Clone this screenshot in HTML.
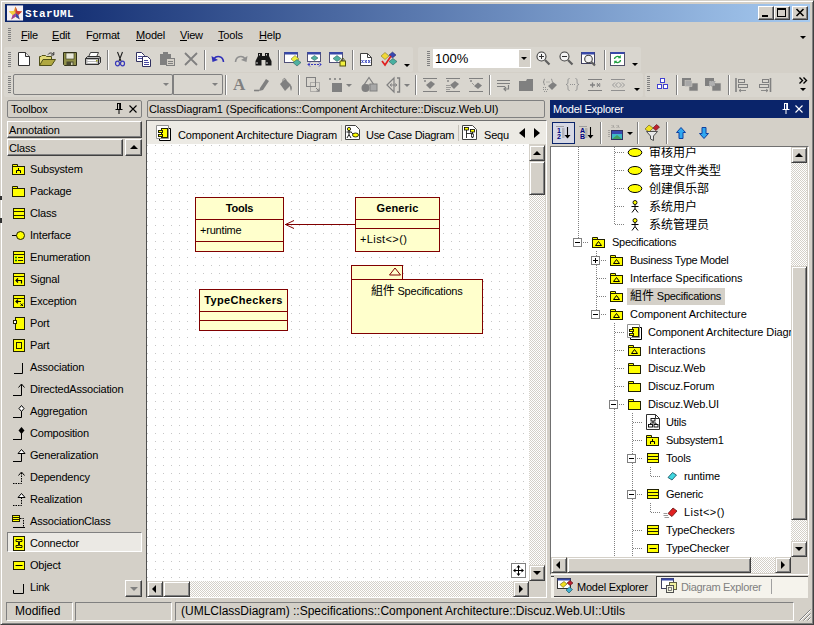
<!DOCTYPE html>
<html><head><meta charset="utf-8"><title>StarUML</title>
<style>
*{box-sizing:border-box;margin:0;padding:0}
html,body{width:814px;height:625px;overflow:hidden;background:#d4d0c8}
body{font-family:"Liberation Sans","Noto Sans CJK SC",sans-serif;font-size:11px;color:#000;position:relative}
#w{position:absolute;left:0;top:0;width:814px;height:625px;background:#d4d0c8;overflow:hidden}
.a{position:absolute}
.t{position:absolute;white-space:nowrap;line-height:14px;height:14px;letter-spacing:-0.2px}
.t12{font-size:12px}
.raised{border:1px solid;border-color:#fff #404040 #404040 #fff;box-shadow:inset -1px -1px 0 #808080}
.raised2{border:1px solid;border-color:#d4d0c8 #404040 #404040 #d4d0c8;box-shadow:inset 1px 1px 0 #fff,inset -1px -1px 0 #808080}
.sunken{border:1px solid;border-color:#808080 #fff #fff #808080;box-shadow:inset 1px 1px 0 #404040,inset -1px -1px 0 #d4d0c8}
.sunk1{border:1px solid;border-color:#808080 #fff #fff #808080}
.hdr{border:1px solid #808080;border-radius:2px;background:#d4d0c8}
.grip{position:absolute;width:3px;background:repeating-linear-gradient(to bottom,#808080 0,#808080 1px,transparent 1px,transparent 2px)}
.sep{position:absolute;width:2px;border-left:1px solid #808080;border-right:1px solid #fff}
.sbtrack{background:repeating-conic-gradient(#fff 0% 25%,#d4d0c8 0% 50%) 0 0/2px 2px}
u{text-decoration:underline}
svg{position:absolute;overflow:visible}
.tri{position:absolute;width:0;height:0;border-style:solid}
</style></head><body><div id="w">
<!-- outer frame -->
<div class="a" style="left:0;top:0;width:814px;height:625px;border:1px solid;border-color:#d4d0c8 #404040 #404040 #d4d0c8;box-shadow:inset 1px 1px 0 #fff,inset -1px -1px 0 #808080"></div>
<!-- title bar -->
<div class="a" style="left:5px;top:4px;width:805px;height:18px;background:linear-gradient(to right,#0a246a 0%,#a6caf0 100%)"></div>
<svg style="left:7px;top:5px" width="17" height="16" viewBox="0 0 18 16"><rect x="0" y="0" width="17" height="16" fill="#f4f0f4"/><polygon points="9,1 11,6 16,6.5 12,10 13.5,15 9,12 4.5,15 6,10 2,6.5 7,6" fill="#e8b030"/><polygon points="9,1 11,6 16,6.5 12,10 9,8" fill="#d03838"/><polygon points="12,10 13.5,15 9,12 9,8" fill="#3848b0"/><polygon points="9,12 4.5,15 6,10 9,8" fill="#a040a0"/><polygon points="2,6.5 7,6 9,8 6,10" fill="#f0d040"/></svg>
<div class="t" style="left:25px;top:7px;color:#fff;font:bold 11px/15px 'Liberation Mono','Noto Sans CJK SC',monospace;letter-spacing:0.4px">StarUML</div>
<!-- window buttons -->
<div class="a raised" style="left:758px;top:6px;width:16px;height:14px;background:#d4d0c8"></div>
<div class="a" style="left:762px;top:15px;width:6px;height:2px;background:#000"></div>
<div class="a raised" style="left:774px;top:6px;width:16px;height:14px;background:#d4d0c8"></div>
<div class="a" style="left:777px;top:8px;width:9px;height:9px;border:1px solid #000;border-top-width:2px"></div>
<div class="a raised" style="left:792px;top:6px;width:16px;height:14px;background:#d4d0c8"></div>
<svg style="left:796px;top:9px" width="8" height="7" viewBox="0 0 8 7"><path d="M0.5,0 L7.5,7 M7.5,0 L0.5,7" stroke="#000" stroke-width="1.6" fill="none"/></svg>
<!-- menu bar -->
<div class="grip" style="left:8px;top:28px;height:13px"></div>
<div class="t" style="left:21px;top:28px"><u>F</u>ile</div>
<div class="t" style="left:52px;top:28px"><u>E</u>dit</div>
<div class="t" style="left:86px;top:28px">F<u>o</u>rmat</div>
<div class="t" style="left:136px;top:28px"><u>M</u>odel</div>
<div class="t" style="left:180px;top:28px"><u>V</u>iew</div>
<div class="t" style="left:218px;top:28px"><u>T</u>ools</div>
<div class="t" style="left:259px;top:28px"><u>H</u>elp</div>
<div class="tri" style="left:800px;top:36px;border-width:3px 3px 0 3px;border-color:#000 transparent transparent transparent"></div>
<!-- edge specks --><div class="a" style="left:0;top:196px;width:2px;height:4px;background:#303030"></div><div class="a" style="left:0;top:218px;width:2px;height:5px;background:#303030"></div>
<!-- toolbar backgrounds -->
<div class="a" style="left:4px;top:47px;width:409px;height:25px;background:#d9d6cf;border-radius:2px"></div>
<div class="a" style="left:418px;top:47px;width:223px;height:25px;background:#d9d6cf;border-radius:2px"></div>
<div class="a" style="left:4px;top:73px;width:639px;height:24px;background:#d9d6cf;border-radius:2px"></div>
<div class="a" style="left:645px;top:73px;width:165px;height:24px;background:#d9d6cf;border-radius:2px"></div>
<!-- toolbar 1 -->
<div class="grip" style="left:8px;top:52px;height:15px"></div>
<!-- new -->
<svg style="left:17px;top:51px" width="16" height="16" viewBox="0 0 16 16"><path d="M1.5,1.5 H8.5 L12.5,5.5 V14.5 H1.5 Z" fill="#fff" stroke="#303030"/><path d="M8.5,1.5 V5.5 H12.5" fill="#e8e8e8" stroke="#303030"/></svg>
<!-- open -->
<svg style="left:39px;top:51px" width="18" height="16" viewBox="0 0 18 16"><path d="M0.5,14.5 V5.5 H2 L3,4.5 H6.5 L7.5,5.5 H12.5 V8" fill="#e0d878" stroke="#505018"/><path d="M0.5,14.5 L4,8.5 H16.5 L12.5,14.5 Z" fill="#b0a840" stroke="#505018"/><path d="M9,3.5 C10.5,1.5 13,1.5 14.5,3.5 M14.8,1 V4 H12" fill="none" stroke="#303030"/></svg>
<!-- save -->
<svg style="left:62px;top:51px" width="16" height="16" viewBox="0 0 16 16"><path d="M1.5,1.5 H14.5 V14.5 H2.5 L1.5,13.5 Z" fill="#909048" stroke="#303018"/><rect x="4" y="2" width="8" height="6" fill="#e8e8d8" stroke="#303018" stroke-width="0.6"/><rect x="4.5" y="10.5" width="7" height="4" fill="#484830"/><rect x="9" y="11.5" width="1.6" height="2.5" fill="#d0d0b0"/></svg>
<!-- print -->
<svg style="left:84px;top:51px" width="18" height="16" viewBox="0 0 18 16"><path d="M4.5,6 L6.5,1.5 H14.5 L12.5,6" fill="#fff" stroke="#404040"/><path d="M1.5,7.5 L3.5,5.5 H15.5 L16.5,6.5 V11.5 L14.5,13.5 H1.5 Z" fill="#b8b8b8" stroke="#303030"/><path d="M1.5,7.5 H14.5 V13.5 M14.5,7.5 L16.5,6.5" fill="none" stroke="#303030"/><path d="M3.5,9.5 H12.5 M3.5,11.5 H12.5" stroke="#fff"/><rect x="12" y="9" width="1.5" height="1.5" fill="#a0a020"/></svg>
<div class="sep" style="left:107px;top:50px;height:20px"></div>
<!-- cut -->
<svg style="left:114px;top:51px" width="12" height="16" viewBox="0 0 12 16"><path d="M3.5,1 L7,10 M8.5,1 L5,10" fill="none" stroke="#202020" stroke-width="1.1"/><ellipse cx="3.5" cy="12.5" rx="2" ry="2.4" fill="none" stroke="#3838b8" stroke-width="1.2"/><ellipse cx="8.5" cy="12.5" rx="2" ry="2.4" fill="none" stroke="#3838b8" stroke-width="1.2"/></svg>
<!-- copy -->
<svg style="left:136px;top:51px" width="16" height="16" viewBox="0 0 16 16"><path d="M0.5,1.5 H5.5 L8.5,4.5 V10.5 H0.5 Z" fill="#fff" stroke="#303060"/><path d="M6.5,5.5 H11.5 L14.5,8.5 V15.5 H6.5 Z" fill="#fff" stroke="#303060"/><path d="M2,5.5 H6 M2,7.5 H6 M8,9.5 H12 M8,11.5 H13 M8,13.5 H13" stroke="#4848a0"/></svg>
<!-- paste (disabled) -->
<svg style="left:159px;top:51px" width="17" height="16" viewBox="0 0 17 16"><path d="M1,3 H12 V14 H1 Z" fill="#808080"/><rect x="4" y="1" width="5" height="3" fill="#808080"/><rect x="7.5" y="7.5" width="8" height="7" fill="#d4d0c8" stroke="#808080"/><path d="M9,10.5 H14 M9,12.5 H14" stroke="#808080"/></svg>
<!-- delete (disabled) -->
<svg style="left:184px;top:52px" width="14" height="14" viewBox="0 0 14 14"><path d="M1,1 L13,13 M13,1 L1,13" stroke="#808080" stroke-width="1.8" fill="none"/></svg>
<div class="sep" style="left:204px;top:50px;height:20px"></div>
<!-- undo -->
<svg style="left:211px;top:53px" width="14" height="12" viewBox="0 0 14 12"><path d="M3,5.5 C6,2 12,3 12.5,9" fill="none" stroke="#3030b8" stroke-width="1.6"/><path d="M0.5,3 L1.5,9 L7,7 Z" fill="#3030b8"/></svg>
<!-- redo (disabled) -->
<svg style="left:234px;top:53px" width="14" height="12" viewBox="0 0 14 12"><path d="M11,5.5 C8,2 2,3 1.5,9" fill="none" stroke="#909090" stroke-width="1.6"/><path d="M13.5,3 L12.5,9 L7,7 Z" fill="#909090"/></svg>
<!-- find -->
<svg style="left:255px;top:51px" width="17" height="16" viewBox="0 0 17 16"><path d="M3,2 H7 V5 H10 V2 H14 V5 L16.5,10 V14.5 H10.5 V9 H6.5 V14.5 H0.5 V10 L3,5 Z" fill="#181818"/><path d="M2,11 V13 M12,11 V13 M4.5,3 V4.5 M11.5,3 V4.5" stroke="#d0d0d0" stroke-width="1"/></svg>
<div class="sep" style="left:278px;top:50px;height:20px"></div>
<!-- win icons -->
<svg style="left:284px;top:51px" width="18" height="16" viewBox="0 0 18 16"><rect x="0.5" y="1.5" width="13" height="10" fill="#fff" stroke="#505078"/><rect x="0.5" y="1" width="13" height="2.5" fill="#3848a8"/><polygon points="7,8 11,4.5 15,8 11,11.5" fill="#f0f040" stroke="#606020" stroke-width="0.5"/><polygon points="9,11.5 13,8.5 17,11.5 13,15" fill="#50b0a0" stroke="#205050" stroke-width="0.5"/></svg>
<svg style="left:307px;top:51px" width="16" height="16" viewBox="0 0 16 16"><rect x="0.5" y="1.5" width="13" height="9" fill="#fff" stroke="#505078"/><rect x="0.5" y="1" width="13" height="2.5" fill="#3848a8"/><polygon points="4,7 7.5,4.5 11,7 7.5,9.5" fill="#50b0a0" stroke="#205050" stroke-width="0.5"/><path d="M1,13.5 H14" stroke="#3838c0" stroke-dasharray="2 1"/><path d="M3,11.5 L1,13.5 L3,15.5 M12,11.5 L14,13.5 L12,15.5" fill="none" stroke="#3838c0"/></svg>
<svg style="left:329px;top:51px" width="18" height="16" viewBox="0 0 18 16"><rect x="0.5" y="1.5" width="13" height="10" fill="#fff" stroke="#505078"/><rect x="0.5" y="1" width="13" height="2.5" fill="#3848a8"/><polygon points="4,7.5 8,4.5 12,7.5 8,10.5" fill="#50b0a0" stroke="#205050" stroke-width="0.5"/><rect x="11" y="10" width="5.5" height="5" fill="#f0f040" stroke="#505010"/><path d="M12.5,10 V8.5 C12.5,7 15,7 15,8.5 V10" fill="none" stroke="#505010"/></svg>
<div class="sep" style="left:352px;top:50px;height:20px"></div>
<svg style="left:359px;top:51px" width="14" height="16" viewBox="0 0 14 16"><path d="M1.5,2.5 H8.5 L12.5,6.5 V14.5 H1.5 Z" fill="#fff" stroke="#404040"/><path d="M8.5,2.5 V6.5 H12.5" fill="none" stroke="#404040"/><path d="M2.5,9 L4.5,12 M4.5,9 L2.5,12 M5.8,9 L7.8,12 M7.8,9 L5.8,12 M9.2,9 L11.2,12 M11.2,9 L9.2,12" stroke="#3040c0" stroke-width="0.9"/></svg>
<svg style="left:380px;top:51px" width="18" height="16" viewBox="0 0 18 16"><polygon points="1,5 5,1.5 9,5 5,8.5" fill="#f0d838" stroke="#706010" stroke-width="0.5"/><polygon points="9,4 12.5,1 16,4 12.5,7" fill="#3848b0" stroke="#202060" stroke-width="0.5"/><polygon points="9,10.5 13,7.5 17,10.5 13,14" fill="#48b0a0" stroke="#205050" stroke-width="0.5"/><path d="M2,10 L5,14 L11,5" fill="none" stroke="#e02020" stroke-width="1.7"/></svg>
<div class="tri" style="left:404px;top:64px;border-width:3px 3px 0 3px;border-color:#000 transparent transparent transparent"></div>
<!-- zoom toolbar -->
<div class="grip" style="left:427px;top:51px;height:15px"></div>
<div class="a" style="left:433px;top:49px;width:98px;height:19px;background:#fff"></div>
<div class="t" style="left:435px;top:51px;font-size:13px;line-height:15px;letter-spacing:0">100%</div>
<div class="a" style="left:519px;top:50px;width:11px;height:17px;background:#d4d0c8"></div>
<div class="tri" style="left:521px;top:57px;border-width:3px 3px 0 3px;border-color:#000 transparent transparent transparent"></div>
<!-- zoom in -->
<svg style="left:536px;top:51px" width="15" height="15" viewBox="0 0 15 15"><circle cx="5.5" cy="5.5" r="4.5" fill="#f4f4f4" stroke="#404040" stroke-width="1.1"/><path d="M3,5.5 H8 M5.5,3 V8" stroke="#303030"/><path d="M9,9 L13.5,13.5" stroke="#606060" stroke-width="2.2"/></svg>
<svg style="left:559px;top:51px" width="15" height="15" viewBox="0 0 15 15"><circle cx="5.5" cy="5.5" r="4.5" fill="#f4f4f4" stroke="#404040" stroke-width="1.1"/><path d="M3,5.5 H8" stroke="#303030"/><path d="M9,9 L13.5,13.5" stroke="#606060" stroke-width="2.2"/></svg>
<svg style="left:581px;top:51px" width="16" height="16" viewBox="0 0 16 16"><rect x="0.5" y="1.5" width="13" height="11" fill="#fff" stroke="#404060"/><rect x="0.5" y="1" width="13" height="2.5" fill="#3848a8"/><circle cx="7.5" cy="8" r="3.8" fill="#f0f0f0" stroke="#404040" stroke-width="1.1"/><path d="M10.5,11 L14,14.5" stroke="#606060" stroke-width="2.2"/></svg>
<div class="sep" style="left:604px;top:50px;height:20px"></div>
<svg style="left:610px;top:51px" width="16" height="16" viewBox="0 0 16 16"><rect x="0.5" y="1.5" width="14" height="13" fill="#fff" stroke="#505068"/><rect x="0.5" y="1" width="14" height="2" fill="#3848a8"/><path d="M4.5,8 C4.5,5.5 8,4.5 10,6.5 M10.5,9 C10.5,11.5 7,12.5 5,10.5" fill="none" stroke="#20a040" stroke-width="1.4"/><path d="M10.8,4 V7.2 H7.6 Z M4.2,13 V9.8 H7.4 Z" fill="#20a040"/></svg>
<div class="tri" style="left:632px;top:63px;border-width:3px 3px 0 3px;border-color:#000 transparent transparent transparent"></div>
<!-- toolbar 2 -->
<div class="grip" style="left:8px;top:76px;height:17px"></div>
<div class="a" style="left:13px;top:74px;width:160px;height:21px;border:1px solid #808080;border-radius:2px"></div>
<div class="tri" style="left:163px;top:83px;border-width:3px 3px 0 3px;border-color:#808080 transparent transparent transparent"></div>
<div class="a" style="left:172px;top:74px;width:51px;height:21px;border:1px solid #808080;border-radius:2px;border-left-width:2px"></div>
<div class="tri" style="left:212px;top:83px;border-width:3px 3px 0 3px;border-color:#808080 transparent transparent transparent"></div>
<div class="sep" style="left:225px;top:75px;height:20px"></div>
<div class="t" style="left:233px;top:75px;font:bold 17px/20px 'Liberation Serif',serif;color:#808080">A</div>
<!-- pen -->
<svg style="left:254px;top:77px" width="16" height="16" viewBox="0 0 16 16"><path d="M6,11 L12,2 L15,4 L9,13 L5,14 Z" fill="#808080"/><path d="M0,13.5 H5" stroke="#808080" stroke-width="1.6"/></svg>
<!-- bucket -->
<svg style="left:278px;top:77px" width="15" height="16" viewBox="0 0 15 16"><path d="M2,7 L7,2 L13,8 L7,14 Z" fill="#808080"/><path d="M5,5 C4,1 8,0 8,4" fill="none" stroke="#808080"/><path d="M12,8 C14.5,9 14,12 13,14 C12,12 12,10 12,8 Z" fill="#808080"/></svg>
<div class="sep" style="left:298px;top:75px;height:20px"></div>
<!-- dashed squares -->
<svg style="left:306px;top:77px" width="15" height="16" viewBox="0 0 15 16"><rect x="0.5" y="0.5" width="9" height="9" fill="none" stroke="#808080"/><rect x="4.5" y="5.5" width="9" height="9" fill="none" stroke="#808080" stroke-dasharray="1 1"/><path d="M10,11 L13,14 M13,11.5 V14 H10.5" stroke="#808080" fill="none"/></svg>
<!-- dots + square -->
<svg style="left:328px;top:77px" width="26" height="16" viewBox="0 0 26 16"><path d="M1,1 L3,3 M3,1 L1,3 M6,1 L8,3 M8,1 L6,3 M11,1 L13,3 M13,1 L11,3" stroke="#808080" stroke-width="0.8"/><rect x="4" y="6" width="10" height="9" fill="#808080"/><polygon points="18,7 24,7 21,10" fill="#808080"/></svg>
<!-- shapes -->
<svg style="left:361px;top:76px" width="17" height="17" viewBox="0 0 17 17"><polygon points="8,1.5 13,9 3,9" fill="none" stroke="#808080" stroke-width="1.2"/><circle cx="4.5" cy="12" r="4" fill="#808080"/><rect x="9" y="8" width="7" height="7" fill="#a8a8a8" stroke="#808080"/></svg>
<!-- arrows -->
<svg style="left:386px;top:76px" width="16" height="18" viewBox="0 0 16 18"><path d="M1,9 L8,2 V16 Z" fill="none" stroke="#808080" stroke-width="1.2"/><path d="M11,2 H13.5 V16 H11" fill="none" stroke="#808080" stroke-width="1.4"/><path d="M4,9 H11 M6,7.5 L4,9 L6,10.5 M9,7.5 L11,9 L9,10.5" stroke="#808080" fill="none" stroke-width="0.9"/></svg>
<div class="tri" style="left:404px;top:84px;border-width:3px 3px 0 3px;border-color:#808080 transparent transparent transparent"></div>
<div class="sep" style="left:415px;top:75px;height:20px"></div>
<!-- three underline icons -->
<svg style="left:422px;top:77px" width="16" height="16" viewBox="0 0 16 16"><path d="M1,1.5 H15 M1,14.5 H15" stroke="#808080"/><polygon points="4,8 9,4 13,7 8,12" fill="#808080"/><path d="M2,3 L4,5 M4,3 L2,5" stroke="#808080" stroke-width="0.7"/></svg>
<svg style="left:445px;top:77px" width="16" height="16" viewBox="0 0 16 16"><path d="M1,1.5 H15 M1,14.5 H15" stroke="#808080"/><polygon points="5,8 10,4 14,7 9,12" fill="#808080"/><path d="M2,3 L4,5 M4,3 L2,5 M1,8.5 H5 M1,10.5 H6 M1,12.5 H5" stroke="#808080" stroke-width="0.7"/></svg>
<svg style="left:468px;top:77px" width="16" height="16" viewBox="0 0 16 16"><path d="M1,1.5 H15 M1,14.5 H15" stroke="#808080"/><polygon points="6,9 10,5.5 14,8.5 10,12" fill="#808080"/><path d="M2,3 L4,5 M4,3 L2,5 M4,6 L6,8" stroke="#808080" stroke-width="0.7"/></svg>
<div class="sep" style="left:489px;top:75px;height:20px"></div>
<svg style="left:497px;top:79px" width="14" height="13" viewBox="0 0 14 13"><path d="M0,1.5 H13 M0,4.5 H13 M0,7.5 H8" stroke="#808080" stroke-width="1.2"/><path d="M11.5,6 V10 H7 M9,8 L7,10 L9,12" fill="none" stroke="#808080" stroke-width="1.2"/></svg>
<svg style="left:519px;top:78px" width="15" height="14" viewBox="0 0 15 14"><path d="M0,3 H7 L8,1 H14 V13 H0 Z" fill="#808080"/></svg>
<svg style="left:542px;top:77px" width="16" height="16" viewBox="0 0 16 16"><polygon points="6,9 11,5 15,8 10,13" fill="#808080"/><path d="M3,2 C1,2 3,5 1,5 C3,5 1,8 3,8 M9,2 C11,2 9,5 11,5" fill="none" stroke="#808080" stroke-width="0.8"/><path d="M4.5,5 H8 M1,10.5 H5 M1,12.5 H6 M2,14.5 H6" stroke="#808080" stroke-width="0.8" stroke-dasharray="1 1"/></svg>
<svg style="left:565px;top:77px" width="16" height="16" viewBox="0 0 16 16"><path d="M4.5,1.5 C1.5,1.5 4.5,7.5 1,7.5 C4.5,7.5 1.5,13.5 4.5,13.5 M10.5,1.5 C13.5,1.5 10.5,7.5 14,7.5 C10.5,7.5 13.5,13.5 10.5,13.5" fill="none" stroke="#909090" stroke-width="1"/><path d="M5,7.5 H10" stroke="#909090" stroke-dasharray="1 1"/></svg>
<svg style="left:588px;top:78px" width="15" height="14" viewBox="0 0 15 14"><path d="M0,1.5 H14 M0,12.5 H14" stroke="#808080"/><path d="M2,7 H7 M4.5,4.5 V9.5" stroke="#808080" stroke-width="1.3"/><path d="M9,5 L12,9 M9,9 L12,5 M8.5,7 H12.5" stroke="#808080" stroke-width="0.9"/></svg>
<svg style="left:611px;top:78px" width="15" height="14" viewBox="0 0 15 14"><path d="M0,1.5 H14 M0,12.5 H14" stroke="#909090"/><path d="M4,4.5 L1.5,7 L4,9.5 M7,4.5 L4.5,7 L7,9.5 M8,4.5 L10.5,7 L8,9.5 M11,4.5 L13.5,7 L11,9.5" fill="none" stroke="#909090" stroke-width="0.9"/></svg>
<div class="tri" style="left:634px;top:88px;border-width:3px 3px 0 3px;border-color:#000 transparent transparent transparent"></div>
<div class="grip" style="left:647px;top:76px;height:15px"></div>
<!-- blue boxes -->
<svg style="left:657px;top:78px" width="12" height="12" viewBox="0 0 12 12"><rect x="3.5" y="0.5" width="4" height="4" fill="#fff" stroke="#4040d0"/><rect x="0.5" y="6.5" width="4" height="4" fill="#fff" stroke="#4040d0"/><rect x="6.5" y="6.5" width="4" height="4" fill="#fff" stroke="#4040d0"/></svg>
<div class="sep" style="left:676px;top:75px;height:20px"></div>
<svg style="left:682px;top:78px" width="17" height="14" viewBox="0 0 17 14"><rect x="0" y="0" width="9" height="8" fill="#808080"/><rect x="7" y="5" width="9" height="8" fill="#808080" stroke="#d4d0c8" stroke-width="0.6"/><rect x="3" y="2.5" width="7" height="6" fill="#a8a8a8" stroke="#d4d0c8" stroke-width="0.5"/></svg>
<svg style="left:705px;top:78px" width="17" height="14" viewBox="0 0 17 14"><rect x="0" y="0" width="9" height="8" fill="#808080"/><rect x="7" y="5" width="9" height="8" fill="#808080" stroke="#d4d0c8" stroke-width="0.6"/><rect x="4" y="3" width="6" height="5" fill="#b0b0b0" stroke="#808080" stroke-width="0.5" stroke-dasharray="1 1"/></svg>
<div class="sep" style="left:728px;top:75px;height:20px"></div>
<svg style="left:735px;top:78px" width="14" height="14" viewBox="0 0 14 14"><path d="M1,0 V14" stroke="#808080" stroke-width="1.6"/><rect x="3.5" y="1.5" width="6" height="3" fill="none" stroke="#808080"/><rect x="3.5" y="6.5" width="9" height="3" fill="none" stroke="#808080"/><path d="M4,12.5 H11 M6,11 L4,12.5 L6,14" stroke="#808080" fill="none" stroke-width="0.9"/></svg>
<svg style="left:758px;top:78px" width="14" height="14" viewBox="0 0 14 14"><path d="M12.5,0 V14" stroke="#808080" stroke-width="1.6"/><rect x="4.5" y="1.5" width="6" height="3" fill="none" stroke="#808080"/><rect x="1.5" y="6.5" width="9" height="3" fill="none" stroke="#808080"/><path d="M3,12.5 H10 M8,11 L10,12.5 L8,14" stroke="#808080" fill="none" stroke-width="0.9"/></svg>
<svg style="left:799px;top:77px" width="8" height="7" viewBox="0 0 8 7"><path d="M0.5,0.5 L3.5,3.5 L0.5,6.5 M4.5,0.5 L7.5,3.5 L4.5,6.5" fill="none" stroke="#000" stroke-width="1.4"/></svg>
<div class="tri" style="left:800px;top:88px;border-width:3px 3px 0 3px;border-color:#000 transparent transparent transparent"></div>
<!-- toolbox -->
<div class="a hdr" style="left:7px;top:100px;width:135px;height:18px"></div>
<div class="t" style="left:11px;top:102px">Toolbox</div>
<svg style="left:115px;top:103px" width="8" height="11" viewBox="0 0 8 11"><path d="M2,0.5 H6 M2.5,0.5 V6 M5.5,0.5 V6 M4.7,0.5 V6 M0.5,6.5 H7.5 M4,7 V11" stroke="#000" fill="none"/></svg>
<svg style="left:129px;top:105px" width="8" height="8" viewBox="0 0 8 8"><path d="M0.5,0.5 L7.5,7.5 M7.5,0.5 L0.5,7.5" stroke="#000" stroke-width="1.1" fill="none"/></svg>
<div class="a raised" style="left:7px;top:121px;width:135px;height:17px"></div>
<div class="t" style="left:9px;top:123px">Annotation</div>
<div class="a raised" style="left:7px;top:139px;width:116px;height:17px"></div>
<div class="t" style="left:9px;top:141px">Class</div>
<div class="a raised" style="left:125px;top:139px;width:17px;height:17px"></div>
<div class="tri" style="left:130px;top:145px;border-width:0 4px 4px 4px;border-color:transparent transparent #000 transparent"></div>
<svg style="left:12px;top:163px" width="14" height="14" viewBox="0 0 14 14"><path d="M0.5,3.5 V1.5 H5.5 V3.5" fill="#ffff00" stroke="#202000"/><rect x="0.5" y="3.5" width="12" height="8" fill="#ffff00" stroke="#202000"/><path d="M6.5,5 V7.5 M4.5,10 V7.5 H8.5 V10" fill="none" stroke="#000"/></svg>
<div class="t" style="left:30px;top:162px">Subsystem</div>
<svg style="left:12px;top:185px" width="14" height="14" viewBox="0 0 14 14"><path d="M0.5,3.5 V1.5 H5.5 V3.5" fill="#ffff00" stroke="#202000"/><rect x="0.5" y="3.5" width="12" height="8" fill="#ffff00" stroke="#202000"/></svg>
<div class="t" style="left:30px;top:184px">Package</div>
<svg style="left:12px;top:207px" width="14" height="14" viewBox="0 0 14 14"><rect x="1.5" y="1.5" width="11" height="10" fill="#ffff00" stroke="#202000"/><path d="M1.5,4.5 H12.5 M1.5,8.5 H12.5" stroke="#202000"/></svg>
<div class="t" style="left:30px;top:206px">Class</div>
<svg style="left:12px;top:229px" width="14" height="14" viewBox="0 0 14 14"><path d="M0,6.5 H5" stroke="#000"/><circle cx="8.5" cy="6.5" r="4" fill="#ffff00" stroke="#202000"/></svg>
<div class="t" style="left:30px;top:228px">Interface</div>
<svg style="left:12px;top:251px" width="14" height="14" viewBox="0 0 14 14"><rect x="1.5" y="0.5" width="11" height="12" fill="#ffff00" stroke="#202000"/><path d="M1.5,3.5 H12.5" stroke="#202000"/><path d="M3,6.5 H5 M3,9.5 H5" stroke="#008000" stroke-width="1.6"/><path d="M6,6.5 H11 M6,9.5 H11" stroke="#202000"/></svg>
<div class="t" style="left:30px;top:250px">Enumeration</div>
<svg style="left:12px;top:273px" width="14" height="14" viewBox="0 0 14 14"><rect x="1.5" y="0.5" width="11" height="12" fill="#ffff00" stroke="#202000"/><path d="M1.5,3.5 H12.5" stroke="#202000"/><path d="M4,7.5 H9.5 V10.5 M6,5.5 L4,7.5 L6,9.5" fill="none" stroke="#000" stroke-width="1.2"/></svg>
<div class="t" style="left:30px;top:272px">Signal</div>
<svg style="left:12px;top:295px" width="14" height="14" viewBox="0 0 14 14"><rect x="1.5" y="0.5" width="11" height="12" fill="#ffff00" stroke="#202000"/><path d="M1.5,3.5 H12.5" stroke="#202000"/><path d="M4,6.5 H9 M6,4.8 L4,6.5 L6,8.2" fill="none" stroke="#000" stroke-width="1.2"/><path d="M8.5,8.5 L11,11 M11,8.5 L8.5,11" stroke="#000"/></svg>
<div class="t" style="left:30px;top:294px">Exception</div>
<svg style="left:12px;top:317px" width="14" height="14" viewBox="0 0 14 14"><rect x="3.5" y="0.5" width="9" height="12" fill="#ffff00" stroke="#202000"/><rect x="1.5" y="3.5" width="3" height="3" fill="#fff" stroke="#202000"/></svg>
<div class="t" style="left:30px;top:316px">Port</div>
<svg style="left:12px;top:339px" width="14" height="14" viewBox="0 0 14 14"><rect x="1.5" y="0.5" width="11" height="12" fill="#ffff00" stroke="#202000"/><rect x="4.5" y="3.5" width="5" height="6" fill="#ffff00" stroke="#202000"/></svg>
<div class="t" style="left:30px;top:338px">Part</div>
<svg style="left:12px;top:361px" width="14" height="14" viewBox="0 0 14 14"><path d="M2,12.5 H10.5 V2" fill="none" stroke="#000"/></svg>
<div class="t" style="left:30px;top:360px">Association</div>
<svg style="left:12px;top:383px" width="14" height="14" viewBox="0 0 14 14"><path d="M1,12.5 H9.5 V1.5 M6.5,4.5 L9.5,1 L12.5,4.5" fill="none" stroke="#000"/></svg>
<div class="t" style="left:30px;top:382px">DirectedAssociation</div>
<svg style="left:12px;top:405px" width="14" height="14" viewBox="0 0 14 14"><path d="M1,12.5 H9.5 V6" fill="none" stroke="#000"/><polygon points="9.5,0.5 12,3.5 9.5,6.5 7,3.5" fill="#fff" stroke="#000"/></svg>
<div class="t" style="left:30px;top:404px">Aggregation</div>
<svg style="left:12px;top:427px" width="14" height="14" viewBox="0 0 14 14"><path d="M1,12.5 H9.5 V6" fill="none" stroke="#000"/><polygon points="9.5,0 12.5,3.5 9.5,7 6.5,3.5" fill="#000"/></svg>
<div class="t" style="left:30px;top:426px">Composition</div>
<svg style="left:12px;top:449px" width="14" height="14" viewBox="0 0 14 14"><path d="M1,12.5 H9.5 V5" fill="none" stroke="#000"/><polygon points="9.5,0.5 13,4.5 6,4.5" fill="#fff" stroke="#000"/></svg>
<div class="t" style="left:30px;top:448px">Generalization</div>
<svg style="left:12px;top:471px" width="14" height="14" viewBox="0 0 14 14"><path d="M1,12.5 H9.5 V1.5" fill="none" stroke="#000" stroke-dasharray="1.5 1"/><path d="M6.5,4.5 L9.5,1 L12.5,4.5" fill="none" stroke="#000"/></svg>
<div class="t" style="left:30px;top:470px">Dependency</div>
<svg style="left:12px;top:493px" width="14" height="14" viewBox="0 0 14 14"><path d="M1,12.5 H9.5 V5" fill="none" stroke="#000" stroke-dasharray="1.5 1"/><polygon points="9.5,0.5 13,4.5 6,4.5" fill="#fff" stroke="#000"/></svg>
<div class="t" style="left:30px;top:492px">Realization</div>
<svg style="left:12px;top:515px" width="14" height="14" viewBox="0 0 14 14"><rect x="0.5" y="0.5" width="7" height="6" fill="#ffff00" stroke="#202000"/><path d="M0.5,2.5 H7.5 M0.5,4.5 H7.5" stroke="#202000"/><path d="M8,3.5 H11.5 V12" fill="none" stroke="#000" stroke-dasharray="1.5 1"/><path d="M1,12.5 H13" stroke="#000"/></svg>
<div class="t" style="left:30px;top:514px">AssociationClass</div>
<div class="a" style="left:7px;top:532px;width:135px;height:20px;background:#ebe9e4;border:1px solid;border-color:#808080 #fff #fff #808080"></div>
<svg style="left:12px;top:537px" width="14" height="14" viewBox="0 0 14 14"><rect x="1.5" y="-0.5" width="11" height="14" fill="#ffff00" stroke="#202000"/><path d="M4,2.5 H10 V4.5 H7.5 V8.5 H10 V10.5 H4 V8.5 H6.5 V4.5 H4 Z" fill="#ffff00" stroke="#000" stroke-width="0.9"/></svg>
<div class="t" style="left:30px;top:536px">Connector</div>
<svg style="left:12px;top:559px" width="14" height="14" viewBox="0 0 14 14"><rect x="1.5" y="2.5" width="11" height="8" fill="#ffff00" stroke="#202000"/><path d="M3.5,6.5 H10.5" stroke="#000"/></svg>
<div class="t" style="left:30px;top:558px">Object</div>
<svg style="left:12px;top:581px" width="14" height="14" viewBox="0 0 14 14"><path d="M1.5,9 V12.5 H11.5 V3" fill="none" stroke="#000"/></svg>
<div class="t" style="left:30px;top:580px">Link</div>
<div class="a raised" style="left:125px;top:580px;width:17px;height:17px"></div>
<div class="tri" style="left:130px;top:587px;border-width:4px 4px 0 4px;border-color:#808080 transparent transparent transparent"></div>
<!-- diagram header -->
<div class="a hdr" style="left:147px;top:100px;width:398px;height:18px"></div>
<div class="t" style="left:149px;top:102px;letter-spacing:-0.1px">ClassDiagram1 (Specifications::Component Architecture::Discuz.Web.UI)</div>
<!-- diagram frame -->
<div class="a" style="left:146px;top:120px;width:401px;height:478px;border:1px solid;border-color:#707070 #fff #fff #505050"></div>
<!-- tab strip -->
<div class="a" style="left:147px;top:121px;width:399px;height:23px;background:#eceae4"></div>
<!-- tab1 icon: component diagram -->
<svg style="left:156px;top:125px" width="16" height="16" viewBox="0 0 16 16"><path d="M3.5,3.5 H14.5 V15.5 H3.5 Z" fill="#fff" stroke="#000"/><path d="M0.5,0.5 H12.5 V13.5 H0.5 Z" fill="#fff" stroke="#909090"/><rect x="5.5" y="3.5" width="6" height="9" fill="#ffff00" stroke="#202000"/><rect x="2.5" y="5.5" width="4" height="2" fill="#ffff00" stroke="#202000"/><rect x="2.5" y="9.5" width="4" height="2" fill="#ffff00" stroke="#202000"/></svg>
<div class="t" style="left:178px;top:128px;letter-spacing:-0.12px">Component Architecture Diagram</div>
<div class="a" style="left:341px;top:125px;width:1px;height:16px;background:#c4c1b9"></div>
<!-- tab2 icon: use case -->
<svg style="left:345px;top:125px" width="16" height="16" viewBox="0 0 16 16"><path d="M0.5,0.5 H10.5 L14.5,4.5 V14.5 H0.5 Z" fill="#fff" stroke="#404040"/><circle cx="4" cy="4" r="1.6" fill="#ffff00" stroke="#000" stroke-width="0.8"/><path d="M4,5.5 V9.5 M1.5,7 H6.5 M4,9.5 L2,13 M4,9.5 L6,13" stroke="#000" fill="none" stroke-width="0.9"/><ellipse cx="10.5" cy="10" rx="3" ry="2" fill="#ffff00" stroke="#000" stroke-width="0.8"/><path d="M6,7 L8,9" stroke="#000" stroke-width="0.8"/></svg>
<div class="t" style="left:366px;top:128px;letter-spacing:-0.3px">Use Case Diagram</div>
<div class="a" style="left:458px;top:125px;width:1px;height:16px;background:#c4c1b9"></div>
<!-- tab3 icon: sequence -->
<svg style="left:462px;top:125px" width="16" height="16" viewBox="0 0 16 16"><path d="M0.5,0.5 H10.5 L14.5,4.5 V14.5 H0.5 Z" fill="#fff" stroke="#404040"/><rect x="2.5" y="2.5" width="4" height="2.5" fill="#ffff00" stroke="#000" stroke-width="0.8"/><rect x="8.5" y="4.5" width="4" height="2.5" fill="#ffff00" stroke="#000" stroke-width="0.8"/><path d="M4.5,5 V13 M10.5,7 V13 M4.5,8.5 H10" stroke="#000" stroke-width="0.8" fill="none"/><rect x="9.5" y="9" width="2" height="3" fill="#fff" stroke="#000" stroke-width="0.7"/></svg>
<div class="t" style="left:484px;top:128px">Sequ</div>
<div class="tri" style="left:519px;top:128px;border-width:5px 6px 5px 0;border-color:transparent #000 transparent transparent"></div>
<div class="tri" style="left:534px;top:128px;border-width:5px 0 5px 6px;border-color:transparent transparent transparent #000"></div>
<!-- canvas -->
<div class="a" style="left:147px;top:144px;width:382px;height:437px;background-color:#fff;background-image:linear-gradient(90deg,#fff 7px,transparent 7px),linear-gradient(#fff 7px,#c6c6c6 7px);background-size:8px 8px;background-position:1px 2px"></div>
<!-- UML: Tools -->
<div class="a" style="left:195px;top:197px;width:89px;height:55px;background:#ffffcc;border:1px solid #800000"></div>
<div class="a" style="left:195px;top:219px;width:89px;height:1px;background:#800000"></div>
<div class="a" style="left:195px;top:241px;width:89px;height:1px;background:#800000"></div>
<div class="t" style="left:195px;top:201px;width:89px;text-align:center;font-weight:bold">Tools</div>
<div class="t" style="left:200px;top:223px">+runtime</div>
<!-- UML: Generic -->
<div class="a" style="left:355px;top:197px;width:85px;height:55px;background:#ffffcc;border:1px solid #800000"></div>
<div class="a" style="left:355px;top:219px;width:85px;height:1px;background:#800000"></div>
<div class="a" style="left:355px;top:228px;width:85px;height:1px;background:#800000"></div>
<div class="t" style="left:355px;top:201px;width:85px;text-align:center;font-weight:bold;letter-spacing:0.15px">Generic</div>
<div class="t" style="left:360px;top:232px;letter-spacing:0.4px">+List&lt;&gt;()</div>
<!-- arrow -->
<svg style="left:284px;top:219px" width="72" height="11" viewBox="0 0 72 11"><path d="M1,5.5 H71 M10,1.5 L1.5,5.5 L10,9.5" fill="none" stroke="#800000" stroke-width="1"/></svg>
<!-- UML: TypeCheckers -->
<div class="a" style="left:199px;top:289px;width:89px;height:42px;background:#ffffcc;border:1px solid #800000"></div>
<div class="a" style="left:199px;top:311px;width:89px;height:1px;background:#800000"></div>
<div class="a" style="left:199px;top:320px;width:89px;height:1px;background:#800000"></div>
<div class="t" style="left:199px;top:293px;width:89px;text-align:center;font-weight:bold;letter-spacing:0.35px">TypeCheckers</div>
<!-- UML: package -->
<div class="a" style="left:351px;top:265px;width:52px;height:15px;background:#ffffcc;border:1px solid #800000"></div>
<div class="a" style="left:351px;top:279px;width:132px;height:55px;background:#ffffcc;border:1px solid #800000"></div>
<svg style="left:388px;top:267px" width="14" height="9" viewBox="0 0 14 9"><polygon points="7,1 12.5,8 1.5,8" fill="#ffffcc" stroke="#800000"/></svg>
<div class="t" style="left:371px;top:283px;line-height:16px;height:16px"><span style="font-size:12px">組件</span><span style="letter-spacing:-0.2px"> Specifications</span></div>
<!-- v scrollbar -->
<div class="a sbtrack" style="left:529px;top:145px;width:16px;height:436px"></div>
<div class="a raised2" style="left:529px;top:145px;width:16px;height:16px;background:#d4d0c8"></div>
<div class="tri" style="left:533px;top:151px;border-width:0 4px 4px 4px;border-color:transparent transparent #000 transparent"></div>
<div class="a raised2" style="left:529px;top:161px;width:16px;height:34px;background:#d4d0c8"></div>
<div class="a raised2" style="left:529px;top:565px;width:16px;height:16px;background:#d4d0c8"></div>
<div class="tri" style="left:533px;top:571px;border-width:4px 4px 0 4px;border-color:#000 transparent transparent transparent"></div>
<!-- move icon -->
<div class="a" style="left:511px;top:563px;width:15px;height:15px;background:#fff;border:1px solid #808080"></div>
<svg style="left:513px;top:565px" width="11" height="11" viewBox="0 0 11 11"><path d="M5.5,1 V10 M1,5.5 H10" stroke="#000"/><path d="M5.5,0 L7.5,2.5 H3.5 Z M5.5,11 L7.5,8.5 H3.5 Z M0,5.5 L2.5,3.5 V7.5 Z M11,5.5 L8.5,3.5 V7.5 Z" fill="#000"/></svg>
<!-- h scrollbar -->
<div class="a sbtrack" style="left:147px;top:581px;width:382px;height:16px"></div>
<div class="a raised2" style="left:147px;top:581px;width:16px;height:16px;background:#d4d0c8"></div>
<div class="tri" style="left:152px;top:585px;border-width:4px 4px 4px 0;border-color:transparent #000 transparent transparent"></div>
<div class="a raised2" style="left:163px;top:581px;width:27px;height:16px;background:#d4d0c8"></div>
<div class="a raised2" style="left:513px;top:581px;width:16px;height:16px;background:#d4d0c8"></div>
<div class="tri" style="left:519px;top:585px;border-width:4px 0 4px 4px;border-color:transparent transparent transparent #000"></div>
<div class="a" style="left:529px;top:581px;width:16px;height:16px;background:#d4d0c8"></div>
<!-- model explorer -->
<div class="a" style="left:550px;top:100px;width:259px;height:18px;background:#0a246a"></div>
<div class="t" style="left:553px;top:102px;color:#fff;letter-spacing:-0.25px">Model Explorer</div>
<svg style="left:782px;top:103px" width="8" height="11" viewBox="0 0 8 11"><path d="M2,0.5 H6 M2.5,0.5 V6 M5.5,0.5 V6 M4.7,0.5 V6 M0.5,6.5 H7.5 M4,7 V11" stroke="#fff" fill="none"/></svg>
<svg style="left:795px;top:105px" width="8" height="8" viewBox="0 0 8 8"><path d="M0.5,0.5 L7.5,7.5 M7.5,0.5 L0.5,7.5" stroke="#fff" stroke-width="1.1" fill="none"/></svg>
<div class="a" style="left:552px;top:122px;width:23px;height:22px;background:#d6d8e4;border:1px solid #0a246a"></div>
<svg style="left:556px;top:125px" width="16" height="16" viewBox="0 0 16 16"><text x="1" y="7.5" font-family="Liberation Sans,sans-serif" font-size="7" font-weight="bold" fill="#000080">1</text><text x="1" y="13.5" font-family="Liberation Sans,sans-serif" font-size="7" font-weight="bold" fill="#000080">2</text><path d="M0,1.5 H8" stroke="#909090" stroke-width="0.8"/><path d="M6,4 H8.5 M6,6 H8.5 M6,8 H8.5 M6,10 H8.5 M6,12 H8.5" stroke="#808080" stroke-width="0.8"/><path d="M11.5,2 V12" fill="none" stroke="#000" stroke-width="1.1"/><path d="M8.5,10 H14.5 L11.5,13.5 Z" fill="#000"/></svg>
<svg style="left:579px;top:125px" width="16" height="16" viewBox="0 0 16 16"><text x="1" y="7.5" font-family="Liberation Sans,sans-serif" font-size="7" font-weight="bold" fill="#000080">A</text><text x="1" y="13.5" font-family="Liberation Sans,sans-serif" font-size="7" font-weight="bold" fill="#000080">B</text><path d="M0,1.5 H8" stroke="#909090" stroke-width="0.8"/><path d="M6,4 H8.5 M6,6 H8.5 M6,8 H8.5 M6,10 H8.5 M6,12 H8.5" stroke="#808080" stroke-width="0.8"/><path d="M11.5,2 V12" fill="none" stroke="#000" stroke-width="1.1"/><path d="M8.5,10 H14.5 L11.5,13.5 Z" fill="#000"/></svg>
<div class="sep" style="left:600px;top:122px;height:22px"></div>
<svg style="left:608px;top:125px" width="16" height="16" viewBox="0 0 16 16"><path d="M4,0.5 L6,2.5 M6,0.5 L4,2.5 M9,0.5 L11,2.5 M11,0.5 L9,2.5 M1,5 V12" stroke="#606060" stroke-width="0.8" stroke-dasharray="1 1"/><rect x="3.5" y="5.5" width="11" height="9" fill="#40b8c8" stroke="#303060"/><rect x="4" y="6" width="10" height="3" fill="#3848b0"/><path d="M4,14 L9,10 L14,14 Z" fill="#40a060"/></svg>
<div class="tri" style="left:627px;top:132px;border-width:3px 3px 0 3px;border-color:#000 transparent transparent transparent"></div>
<div class="sep" style="left:637px;top:122px;height:22px"></div>
<svg style="left:644px;top:124px" width="16" height="18" viewBox="0 0 16 18"><polygon points="1,5 5,1 9,4 5,8" fill="#f0e020" stroke="#605010" stroke-width="0.6"/><polygon points="9,4 12.5,0.5 15.5,3 12,6.5" fill="#c02030" stroke="#501010" stroke-width="0.6"/><path d="M2.5,7.5 H13.5 L9.5,12 V16.5 L6.5,15 V12 Z" fill="#e8e8e8" stroke="#505050"/></svg>
<div class="sep" style="left:666px;top:122px;height:22px"></div>
<svg style="left:676px;top:127px" width="10" height="12" viewBox="0 0 10 12"><path d="M5,0.5 L9.5,5.5 H7 V11.5 H3 V5.5 H0.5 Z" fill="#30a8f0" stroke="#1040a0"/></svg>
<svg style="left:699px;top:127px" width="10" height="12" viewBox="0 0 10 12"><path d="M5,11.5 L9.5,6.5 H7 V0.5 H3 V6.5 H0.5 Z" fill="#30a8f0" stroke="#1040a0"/></svg>
<div class="a" style="left:550px;top:146px;width:259px;height:429px;border:1px solid;border-color:#707070 #fff #fff #707070"></div>
<div class="a" id="tree" style="left:551px;top:147px;width:240px;height:410px;background:#fff;overflow:hidden">
<div class="a" style="left:27px;top:-4px;width:1px;height:18px;background:repeating-linear-gradient(to bottom,#808080 0,#808080 1px,transparent 1px,transparent 2px)"></div>
<div class="a" style="left:63px;top:-4px;width:1px;height:18px;background:repeating-linear-gradient(to bottom,#808080 0,#808080 1px,transparent 1px,transparent 2px)"></div>
<div class="a" style="left:64px;top:5px;width:9px;height:1px;background:repeating-linear-gradient(to right,#808080 0,#808080 1px,transparent 1px,transparent 2px)"></div>
<svg style="left:76px;top:-3px" width="16" height="16" viewBox="0 0 16 16"><ellipse cx="8" cy="8.5" rx="6.8" ry="4" fill="#ffff00" stroke="#000"/></svg>
<div class="t" style="left:98px;top:-2px;line-height:16px;height:16px;font-size:12px;letter-spacing:0">审核用户</div>
<div class="a" style="left:27px;top:14px;width:1px;height:18px;background:repeating-linear-gradient(to bottom,#808080 0,#808080 1px,transparent 1px,transparent 2px)"></div>
<div class="a" style="left:63px;top:14px;width:1px;height:18px;background:repeating-linear-gradient(to bottom,#808080 0,#808080 1px,transparent 1px,transparent 2px)"></div>
<div class="a" style="left:64px;top:23px;width:9px;height:1px;background:repeating-linear-gradient(to right,#808080 0,#808080 1px,transparent 1px,transparent 2px)"></div>
<svg style="left:76px;top:15px" width="16" height="16" viewBox="0 0 16 16"><ellipse cx="8" cy="8.5" rx="6.8" ry="4" fill="#ffff00" stroke="#000"/></svg>
<div class="t" style="left:98px;top:16px;line-height:16px;height:16px;font-size:12px;letter-spacing:0">管理文件类型</div>
<div class="a" style="left:27px;top:32px;width:1px;height:18px;background:repeating-linear-gradient(to bottom,#808080 0,#808080 1px,transparent 1px,transparent 2px)"></div>
<div class="a" style="left:63px;top:32px;width:1px;height:18px;background:repeating-linear-gradient(to bottom,#808080 0,#808080 1px,transparent 1px,transparent 2px)"></div>
<div class="a" style="left:64px;top:41px;width:9px;height:1px;background:repeating-linear-gradient(to right,#808080 0,#808080 1px,transparent 1px,transparent 2px)"></div>
<svg style="left:76px;top:33px" width="16" height="16" viewBox="0 0 16 16"><ellipse cx="8" cy="8.5" rx="6.8" ry="4" fill="#ffff00" stroke="#000"/></svg>
<div class="t" style="left:98px;top:34px;line-height:16px;height:16px;font-size:12px;letter-spacing:0">创建俱乐部</div>
<div class="a" style="left:27px;top:50px;width:1px;height:18px;background:repeating-linear-gradient(to bottom,#808080 0,#808080 1px,transparent 1px,transparent 2px)"></div>
<div class="a" style="left:63px;top:50px;width:1px;height:18px;background:repeating-linear-gradient(to bottom,#808080 0,#808080 1px,transparent 1px,transparent 2px)"></div>
<div class="a" style="left:64px;top:59px;width:9px;height:1px;background:repeating-linear-gradient(to right,#808080 0,#808080 1px,transparent 1px,transparent 2px)"></div>
<svg style="left:76px;top:51px" width="16" height="16" viewBox="0 0 16 16"><circle cx="8" cy="4.5" r="2" fill="#ffff00" stroke="#000" stroke-width="0.9"/><path d="M8,6.5 V10.5 M4.5,8.5 H11.5 M8,10.5 L5,14.5 M8,10.5 L11,14.5" stroke="#000" fill="none"/></svg>
<div class="t" style="left:98px;top:52px;line-height:16px;height:16px;font-size:12px;letter-spacing:0">系统用户</div>
<div class="a" style="left:27px;top:68px;width:1px;height:18px;background:repeating-linear-gradient(to bottom,#808080 0,#808080 1px,transparent 1px,transparent 2px)"></div>
<div class="a" style="left:63px;top:68px;width:1px;height:9px;background:repeating-linear-gradient(to bottom,#808080 0,#808080 1px,transparent 1px,transparent 2px)"></div>
<div class="a" style="left:64px;top:77px;width:9px;height:1px;background:repeating-linear-gradient(to right,#808080 0,#808080 1px,transparent 1px,transparent 2px)"></div>
<svg style="left:76px;top:69px" width="16" height="16" viewBox="0 0 16 16"><circle cx="8" cy="4.5" r="2" fill="#ffff00" stroke="#000" stroke-width="0.9"/><path d="M8,6.5 V10.5 M4.5,8.5 H11.5 M8,10.5 L5,14.5 M8,10.5 L11,14.5" stroke="#000" fill="none"/></svg>
<div class="t" style="left:98px;top:70px;line-height:16px;height:16px;font-size:12px;letter-spacing:0">系统管理员</div>
<div class="a" style="left:27px;top:86px;width:1px;height:9px;background:repeating-linear-gradient(to bottom,#808080 0,#808080 1px,transparent 1px,transparent 2px)"></div>
<div class="a" style="left:32px;top:95px;width:5px;height:1px;background:repeating-linear-gradient(to right,#808080 0,#808080 1px,transparent 1px,transparent 2px)"></div>
<div class="a" style="left:22px;top:91px;width:9px;height:9px;background:#fff;border:1px solid #808080"></div>
<div class="a" style="left:24px;top:95px;width:5px;height:1px;background:#000"></div>
<svg style="left:40px;top:87px" width="16" height="16" viewBox="0 0 16 16"><path d="M1.5,5.5 V3.5 H6.5 V5.5" fill="#ffff00" stroke="#202000"/><rect x="1.5" y="5.5" width="12" height="8" fill="#ffff00" stroke="#202000"/><polygon points="7.5,7.5 10.5,11.5 4.5,11.5" fill="#ffff00" stroke="#000"/></svg>
<div class="t" style="left:61px;top:88px;letter-spacing:-0.26px">Specifications</div>
<div class="a" style="left:45px;top:104px;width:1px;height:18px;background:repeating-linear-gradient(to bottom,#808080 0,#808080 1px,transparent 1px,transparent 2px)"></div>
<div class="a" style="left:50px;top:113px;width:5px;height:1px;background:repeating-linear-gradient(to right,#808080 0,#808080 1px,transparent 1px,transparent 2px)"></div>
<div class="a" style="left:40px;top:109px;width:9px;height:9px;background:#fff;border:1px solid #808080"></div>
<div class="a" style="left:42px;top:113px;width:5px;height:1px;background:#000"></div>
<div class="a" style="left:44px;top:111px;width:1px;height:5px;background:#000"></div>
<svg style="left:58px;top:105px" width="16" height="16" viewBox="0 0 16 16"><path d="M1.5,5.5 V3.5 H6.5 V5.5" fill="#ffff00" stroke="#202000"/><rect x="1.5" y="5.5" width="12" height="8" fill="#ffff00" stroke="#202000"/><polygon points="7.5,7.5 10.5,11.5 4.5,11.5" fill="#ffff00" stroke="#000"/></svg>
<div class="t" style="left:79px;top:106px;letter-spacing:-0.31px">Business Type Model</div>
<div class="a" style="left:45px;top:122px;width:1px;height:18px;background:repeating-linear-gradient(to bottom,#808080 0,#808080 1px,transparent 1px,transparent 2px)"></div>
<div class="a" style="left:46px;top:131px;width:9px;height:1px;background:repeating-linear-gradient(to right,#808080 0,#808080 1px,transparent 1px,transparent 2px)"></div>
<svg style="left:58px;top:123px" width="16" height="16" viewBox="0 0 16 16"><path d="M1.5,5.5 V3.5 H6.5 V5.5" fill="#ffff00" stroke="#202000"/><rect x="1.5" y="5.5" width="12" height="8" fill="#ffff00" stroke="#202000"/><polygon points="7.5,7.5 10.5,11.5 4.5,11.5" fill="#ffff00" stroke="#000"/></svg>
<div class="t" style="left:79px;top:124px;letter-spacing:-0.05px">Interface Specifications</div>
<div class="a" style="left:45px;top:140px;width:1px;height:18px;background:repeating-linear-gradient(to bottom,#808080 0,#808080 1px,transparent 1px,transparent 2px)"></div>
<div class="a" style="left:46px;top:149px;width:9px;height:1px;background:repeating-linear-gradient(to right,#808080 0,#808080 1px,transparent 1px,transparent 2px)"></div>
<svg style="left:58px;top:141px" width="16" height="16" viewBox="0 0 16 16"><path d="M1.5,5.5 V3.5 H6.5 V5.5" fill="#ffff00" stroke="#202000"/><rect x="1.5" y="5.5" width="12" height="8" fill="#ffff00" stroke="#202000"/><polygon points="7.5,7.5 10.5,11.5 4.5,11.5" fill="#ffff00" stroke="#000"/></svg>
<div class="a" style="left:76px;top:141px;width:98px;height:17px;background:#d4d0c8"></div>
<div class="t" style="left:79px;top:141px;line-height:16px;height:16px"><span style="font-size:12px;letter-spacing:0">組件</span><span style="letter-spacing:-0.26px"> Specifications</span></div>
<div class="a" style="left:45px;top:158px;width:1px;height:9px;background:repeating-linear-gradient(to bottom,#808080 0,#808080 1px,transparent 1px,transparent 2px)"></div>
<div class="a" style="left:50px;top:167px;width:5px;height:1px;background:repeating-linear-gradient(to right,#808080 0,#808080 1px,transparent 1px,transparent 2px)"></div>
<div class="a" style="left:40px;top:163px;width:9px;height:9px;background:#fff;border:1px solid #808080"></div>
<div class="a" style="left:42px;top:167px;width:5px;height:1px;background:#000"></div>
<svg style="left:58px;top:159px" width="16" height="16" viewBox="0 0 16 16"><path d="M1.5,5.5 V3.5 H6.5 V5.5" fill="#ffff00" stroke="#202000"/><rect x="1.5" y="5.5" width="12" height="8" fill="#ffff00" stroke="#202000"/><polygon points="7.5,7.5 10.5,11.5 4.5,11.5" fill="#ffff00" stroke="#000"/></svg>
<div class="t" style="left:79px;top:160px;letter-spacing:-0.06px">Component Architecture</div>
<div class="a" style="left:63px;top:176px;width:1px;height:18px;background:repeating-linear-gradient(to bottom,#808080 0,#808080 1px,transparent 1px,transparent 2px)"></div>
<div class="a" style="left:64px;top:185px;width:9px;height:1px;background:repeating-linear-gradient(to right,#808080 0,#808080 1px,transparent 1px,transparent 2px)"></div>
<svg style="left:76px;top:177px" width="16" height="16" viewBox="0 0 16 16"><path d="M3.5,3.5 H14.5 V15.5 H3.5 Z" fill="#fff" stroke="#000"/><path d="M0.5,0.5 H12.5 V13.5 H0.5 Z" fill="#fff" stroke="#909090"/><rect x="5.5" y="3.5" width="6" height="9" fill="#ffff00" stroke="#202000"/><rect x="2.5" y="5.5" width="4" height="2" fill="#ffff00" stroke="#202000"/><rect x="2.5" y="9.5" width="4" height="2" fill="#ffff00" stroke="#202000"/></svg>
<div class="t" style="left:97px;top:178px;letter-spacing:-0.12px">Component Architecture Diagram</div>
<div class="a" style="left:63px;top:194px;width:1px;height:18px;background:repeating-linear-gradient(to bottom,#808080 0,#808080 1px,transparent 1px,transparent 2px)"></div>
<div class="a" style="left:64px;top:203px;width:9px;height:1px;background:repeating-linear-gradient(to right,#808080 0,#808080 1px,transparent 1px,transparent 2px)"></div>
<svg style="left:76px;top:195px" width="16" height="16" viewBox="0 0 16 16"><path d="M1.5,5.5 V3.5 H6.5 V5.5" fill="#ffff00" stroke="#202000"/><rect x="1.5" y="5.5" width="12" height="8" fill="#ffff00" stroke="#202000"/><polygon points="7.5,7.5 10.5,11.5 4.5,11.5" fill="#ffff00" stroke="#000"/></svg>
<div class="t" style="left:97px;top:196px;letter-spacing:0.05px">Interactions</div>
<div class="a" style="left:63px;top:212px;width:1px;height:18px;background:repeating-linear-gradient(to bottom,#808080 0,#808080 1px,transparent 1px,transparent 2px)"></div>
<div class="a" style="left:64px;top:221px;width:9px;height:1px;background:repeating-linear-gradient(to right,#808080 0,#808080 1px,transparent 1px,transparent 2px)"></div>
<svg style="left:76px;top:213px" width="16" height="16" viewBox="0 0 16 16"><path d="M1.5,5.5 V3.5 H6.5 V5.5" fill="#ffff00" stroke="#202000"/><rect x="1.5" y="5.5" width="12" height="8" fill="#ffff00" stroke="#202000"/></svg>
<div class="t" style="left:97px;top:214px;letter-spacing:-0.12px">Discuz.Web</div>
<div class="a" style="left:63px;top:230px;width:1px;height:18px;background:repeating-linear-gradient(to bottom,#808080 0,#808080 1px,transparent 1px,transparent 2px)"></div>
<div class="a" style="left:64px;top:239px;width:9px;height:1px;background:repeating-linear-gradient(to right,#808080 0,#808080 1px,transparent 1px,transparent 2px)"></div>
<svg style="left:76px;top:231px" width="16" height="16" viewBox="0 0 16 16"><path d="M1.5,5.5 V3.5 H6.5 V5.5" fill="#ffff00" stroke="#202000"/><rect x="1.5" y="5.5" width="12" height="8" fill="#ffff00" stroke="#202000"/></svg>
<div class="t" style="left:97px;top:232px;letter-spacing:-0.12px">Discuz.Forum</div>
<div class="a" style="left:63px;top:248px;width:1px;height:18px;background:repeating-linear-gradient(to bottom,#808080 0,#808080 1px,transparent 1px,transparent 2px)"></div>
<div class="a" style="left:68px;top:257px;width:5px;height:1px;background:repeating-linear-gradient(to right,#808080 0,#808080 1px,transparent 1px,transparent 2px)"></div>
<div class="a" style="left:58px;top:253px;width:9px;height:9px;background:#fff;border:1px solid #808080"></div>
<div class="a" style="left:60px;top:257px;width:5px;height:1px;background:#000"></div>
<svg style="left:76px;top:249px" width="16" height="16" viewBox="0 0 16 16"><path d="M1.5,5.5 V3.5 H6.5 V5.5" fill="#ffff00" stroke="#202000"/><rect x="1.5" y="5.5" width="12" height="8" fill="#ffff00" stroke="#202000"/></svg>
<div class="t" style="left:97px;top:250px;letter-spacing:-0.12px">Discuz.Web.UI</div>
<div class="a" style="left:63px;top:266px;width:1px;height:18px;background:repeating-linear-gradient(to bottom,#808080 0,#808080 1px,transparent 1px,transparent 2px)"></div>
<div class="a" style="left:81px;top:266px;width:1px;height:18px;background:repeating-linear-gradient(to bottom,#808080 0,#808080 1px,transparent 1px,transparent 2px)"></div>
<div class="a" style="left:82px;top:275px;width:9px;height:1px;background:repeating-linear-gradient(to right,#808080 0,#808080 1px,transparent 1px,transparent 2px)"></div>
<svg style="left:94px;top:267px" width="16" height="16" viewBox="0 0 16 16"><path d="M1.5,0.5 H10.5 L14.5,4.5 V15.5 H1.5 Z" fill="#fff" stroke="#303030"/><path d="M10.5,0.5 V4.5 H14.5" fill="none" stroke="#303030"/><rect x="6" y="4.5" width="4" height="2.5" fill="#fff" stroke="#000" stroke-width="0.9"/><rect x="3.5" y="10.5" width="4" height="2.5" fill="#fff" stroke="#000" stroke-width="0.9"/><rect x="9" y="10.5" width="4" height="2.5" fill="#fff" stroke="#000" stroke-width="0.9"/><path d="M8,7 V9 M5.5,10.5 V9 H11 V10.5" fill="none" stroke="#000" stroke-width="0.9"/></svg>
<div class="t" style="left:115px;top:268px;letter-spacing:-0.2px">Utils</div>
<div class="a" style="left:63px;top:284px;width:1px;height:18px;background:repeating-linear-gradient(to bottom,#808080 0,#808080 1px,transparent 1px,transparent 2px)"></div>
<div class="a" style="left:81px;top:284px;width:1px;height:18px;background:repeating-linear-gradient(to bottom,#808080 0,#808080 1px,transparent 1px,transparent 2px)"></div>
<div class="a" style="left:82px;top:293px;width:9px;height:1px;background:repeating-linear-gradient(to right,#808080 0,#808080 1px,transparent 1px,transparent 2px)"></div>
<svg style="left:94px;top:285px" width="16" height="16" viewBox="0 0 16 16"><path d="M1.5,5.5 V3.5 H6.5 V5.5" fill="#ffff00" stroke="#202000"/><rect x="1.5" y="5.5" width="12" height="8" fill="#ffff00" stroke="#202000"/><path d="M7.5,7 V9.5 M5.5,12 V9.5 H9.5 V12" fill="none" stroke="#000"/></svg>
<div class="t" style="left:115px;top:286px;letter-spacing:-0.3px">Subsystem1</div>
<div class="a" style="left:63px;top:302px;width:1px;height:18px;background:repeating-linear-gradient(to bottom,#808080 0,#808080 1px,transparent 1px,transparent 2px)"></div>
<div class="a" style="left:81px;top:302px;width:1px;height:18px;background:repeating-linear-gradient(to bottom,#808080 0,#808080 1px,transparent 1px,transparent 2px)"></div>
<div class="a" style="left:86px;top:311px;width:5px;height:1px;background:repeating-linear-gradient(to right,#808080 0,#808080 1px,transparent 1px,transparent 2px)"></div>
<div class="a" style="left:76px;top:307px;width:9px;height:9px;background:#fff;border:1px solid #808080"></div>
<div class="a" style="left:78px;top:311px;width:5px;height:1px;background:#000"></div>
<svg style="left:94px;top:303px" width="16" height="16" viewBox="0 0 16 16"><rect x="2.5" y="3.5" width="11" height="9" fill="#ffff00" stroke="#202000"/><path d="M2.5,6.5 H13.5 M2.5,9.5 H13.5" stroke="#202000"/></svg>
<div class="t" style="left:115px;top:304px;letter-spacing:-0.2px">Tools</div>
<div class="a" style="left:63px;top:320px;width:1px;height:18px;background:repeating-linear-gradient(to bottom,#808080 0,#808080 1px,transparent 1px,transparent 2px)"></div>
<div class="a" style="left:81px;top:320px;width:1px;height:18px;background:repeating-linear-gradient(to bottom,#808080 0,#808080 1px,transparent 1px,transparent 2px)"></div>
<div class="a" style="left:99px;top:320px;width:1px;height:9px;background:repeating-linear-gradient(to bottom,#808080 0,#808080 1px,transparent 1px,transparent 2px)"></div>
<div class="a" style="left:100px;top:329px;width:9px;height:1px;background:repeating-linear-gradient(to right,#808080 0,#808080 1px,transparent 1px,transparent 2px)"></div>
<svg style="left:112px;top:321px" width="16" height="16" viewBox="0 0 16 16"><polygon points="5,9.5 9.5,4.5 13.5,7 9,12" fill="#40d8e0" stroke="#104858" stroke-width="0.8"/></svg>
<div class="t" style="left:133px;top:322px;letter-spacing:-0.1px">runtime</div>
<div class="a" style="left:63px;top:338px;width:1px;height:18px;background:repeating-linear-gradient(to bottom,#808080 0,#808080 1px,transparent 1px,transparent 2px)"></div>
<div class="a" style="left:81px;top:338px;width:1px;height:18px;background:repeating-linear-gradient(to bottom,#808080 0,#808080 1px,transparent 1px,transparent 2px)"></div>
<div class="a" style="left:86px;top:347px;width:5px;height:1px;background:repeating-linear-gradient(to right,#808080 0,#808080 1px,transparent 1px,transparent 2px)"></div>
<div class="a" style="left:76px;top:343px;width:9px;height:9px;background:#fff;border:1px solid #808080"></div>
<div class="a" style="left:78px;top:347px;width:5px;height:1px;background:#000"></div>
<svg style="left:94px;top:339px" width="16" height="16" viewBox="0 0 16 16"><rect x="2.5" y="3.5" width="11" height="9" fill="#ffff00" stroke="#202000"/><path d="M2.5,6.5 H13.5 M2.5,9.5 H13.5" stroke="#202000"/></svg>
<div class="t" style="left:115px;top:340px;letter-spacing:-0.2px">Generic</div>
<div class="a" style="left:63px;top:356px;width:1px;height:18px;background:repeating-linear-gradient(to bottom,#808080 0,#808080 1px,transparent 1px,transparent 2px)"></div>
<div class="a" style="left:81px;top:356px;width:1px;height:18px;background:repeating-linear-gradient(to bottom,#808080 0,#808080 1px,transparent 1px,transparent 2px)"></div>
<div class="a" style="left:99px;top:356px;width:1px;height:9px;background:repeating-linear-gradient(to bottom,#808080 0,#808080 1px,transparent 1px,transparent 2px)"></div>
<div class="a" style="left:100px;top:365px;width:9px;height:1px;background:repeating-linear-gradient(to right,#808080 0,#808080 1px,transparent 1px,transparent 2px)"></div>
<svg style="left:112px;top:357px" width="16" height="16" viewBox="0 0 16 16"><polygon points="5,9.5 10,4 14,7 9,12.5" fill="#e02020" stroke="#601010" stroke-width="0.8"/><path d="M0.5,9.5 H4 M0.5,11.5 H5 M1.5,13.5 H6" stroke="#808080" stroke-width="0.8"/></svg>
<div class="t" style="left:133px;top:358px;letter-spacing:0.45px">List&lt;&gt;()</div>
<div class="a" style="left:63px;top:374px;width:1px;height:18px;background:repeating-linear-gradient(to bottom,#808080 0,#808080 1px,transparent 1px,transparent 2px)"></div>
<div class="a" style="left:81px;top:374px;width:1px;height:18px;background:repeating-linear-gradient(to bottom,#808080 0,#808080 1px,transparent 1px,transparent 2px)"></div>
<div class="a" style="left:82px;top:383px;width:9px;height:1px;background:repeating-linear-gradient(to right,#808080 0,#808080 1px,transparent 1px,transparent 2px)"></div>
<svg style="left:94px;top:375px" width="16" height="16" viewBox="0 0 16 16"><rect x="2.5" y="3.5" width="11" height="9" fill="#ffff00" stroke="#202000"/><path d="M2.5,6.5 H13.5 M2.5,9.5 H13.5" stroke="#202000"/></svg>
<div class="t" style="left:115px;top:376px;letter-spacing:-0.15px">TypeCheckers</div>
<div class="a" style="left:63px;top:392px;width:1px;height:18px;background:repeating-linear-gradient(to bottom,#808080 0,#808080 1px,transparent 1px,transparent 2px)"></div>
<div class="a" style="left:81px;top:392px;width:1px;height:18px;background:repeating-linear-gradient(to bottom,#808080 0,#808080 1px,transparent 1px,transparent 2px)"></div>
<div class="a" style="left:82px;top:401px;width:9px;height:1px;background:repeating-linear-gradient(to right,#808080 0,#808080 1px,transparent 1px,transparent 2px)"></div>
<svg style="left:94px;top:393px" width="16" height="16" viewBox="0 0 16 16"><rect x="2.5" y="4.5" width="11" height="8" fill="#ffff00" stroke="#202000"/><path d="M4.5,8.5 H11.5" stroke="#000"/></svg>
<div class="t" style="left:115px;top:394px;letter-spacing:-0.15px">TypeChecker</div>
</div>
<div class="a sbtrack" style="left:791px;top:147px;width:16px;height:410px"></div>
<div class="a raised2" style="left:791px;top:147px;width:16px;height:16px;background:#d4d0c8"></div>
<div class="tri" style="left:795px;top:153px;border-width:0 4px 4px 4px;border-color:transparent transparent #000 transparent"></div>
<div class="a raised2" style="left:791px;top:266px;width:16px;height:254px;background:#d4d0c8"></div>
<div class="a raised2" style="left:791px;top:541px;width:16px;height:16px;background:#d4d0c8"></div>
<div class="tri" style="left:795px;top:547px;border-width:4px 4px 0 4px;border-color:#000 transparent transparent transparent"></div>
<div class="a sbtrack" style="left:551px;top:557px;width:240px;height:16px"></div>
<div class="a raised2" style="left:551px;top:557px;width:16px;height:16px;background:#d4d0c8"></div>
<div class="tri" style="left:556px;top:561px;border-width:4px 4px 4px 0;border-color:transparent #000 transparent transparent"></div>
<div class="a raised2" style="left:567px;top:557px;width:184px;height:16px;background:#d4d0c8"></div>
<div class="a raised2" style="left:775px;top:557px;width:16px;height:16px;background:#d4d0c8"></div>
<div class="tri" style="left:781px;top:561px;border-width:4px 0 4px 4px;border-color:transparent transparent transparent #000"></div>
<div class="a" style="left:791px;top:557px;width:16px;height:16px;background:#d4d0c8"></div>
<div class="a" style="left:551px;top:577px;width:257px;height:21px;background:#f5f3ec"></div>
<div class="a" style="left:551px;top:576px;width:3px;height:1px;background:#404040"></div><div class="a" style="left:656px;top:576px;width:152px;height:1px;background:#404040"></div>
<div class="a" style="left:554px;top:576px;width:103px;height:21px;background:#d4d0c8;border-bottom:1px solid #404040;border-right:1px solid #404040"></div>
<svg style="left:557px;top:578px" width="17" height="16" viewBox="0 0 17 16"><rect x="0.5" y="0.5" width="13" height="10" fill="#fff" stroke="#303030"/><rect x="0.5" y="0.5" width="13" height="2" fill="#3848a8"/><polygon points="3,6.5 7,3.5 10,6 6,9.5" fill="#f0e020" stroke="#605010" stroke-width="0.6"/><polygon points="10,5 13,2.5 16,5 13,7.5" fill="#c02030" stroke="#501010" stroke-width="0.6"/><polygon points="9,12 12.5,9 15.5,11.5 12,15" fill="#40b0d0" stroke="#104858" stroke-width="0.6"/></svg>
<div class="t" style="left:577px;top:580px;letter-spacing:-0.22px">Model Explorer</div>
<svg style="left:661px;top:578px" width="17" height="16" viewBox="0 0 17 16"><rect x="0.5" y="0.5" width="12" height="10" fill="#fff" stroke="#404060"/><rect x="0.5" y="0.5" width="12" height="2" fill="#3848a8"/><rect x="8.5" y="4.5" width="7" height="7" fill="#f0f0a0" stroke="#606040"/><rect x="5.5" y="7.5" width="7" height="7" fill="#f4f4e0" stroke="#505050"/><rect x="7.5" y="9.5" width="3" height="3" fill="none" stroke="#606060" stroke-width="0.8"/></svg>
<div class="t" style="left:681px;top:580px;color:#808080;letter-spacing:-0.32px">Diagram Explorer</div>
<div class="a" style="left:771px;top:579px;width:1px;height:15px;background:#a0a0a0"></div>
<!-- status bar -->
<div class="a sunk1" style="left:6px;top:602px;width:67px;height:19px"></div>
<div class="t" style="left:15px;top:604px;font-size:12px;line-height:15px;letter-spacing:0">Modified</div>
<div class="a sunk1" style="left:75px;top:602px;width:97px;height:19px"></div>
<div class="a sunk1" style="left:175px;top:602px;width:619px;height:19px"></div>
<div class="t" style="left:181px;top:604px;font-size:12px;line-height:15px;letter-spacing:0">(UMLClassDiagram) ::Specifications::Component Architecture::Discuz.Web.UI::Utils</div>
<svg style="left:799px;top:609px" width="12" height="12" viewBox="0 0 12 12"><path d="M11.5,0.5 L0.5,11.5 M11.5,4.5 L4.5,11.5 M11.5,8.5 L8.5,11.5" stroke="#808080"/><path d="M11.5,1.5 L1.5,11.5 M11.5,5.5 L5.5,11.5 M11.5,9.5 L9.5,11.5" stroke="#fff"/></svg>
</div></body></html>
